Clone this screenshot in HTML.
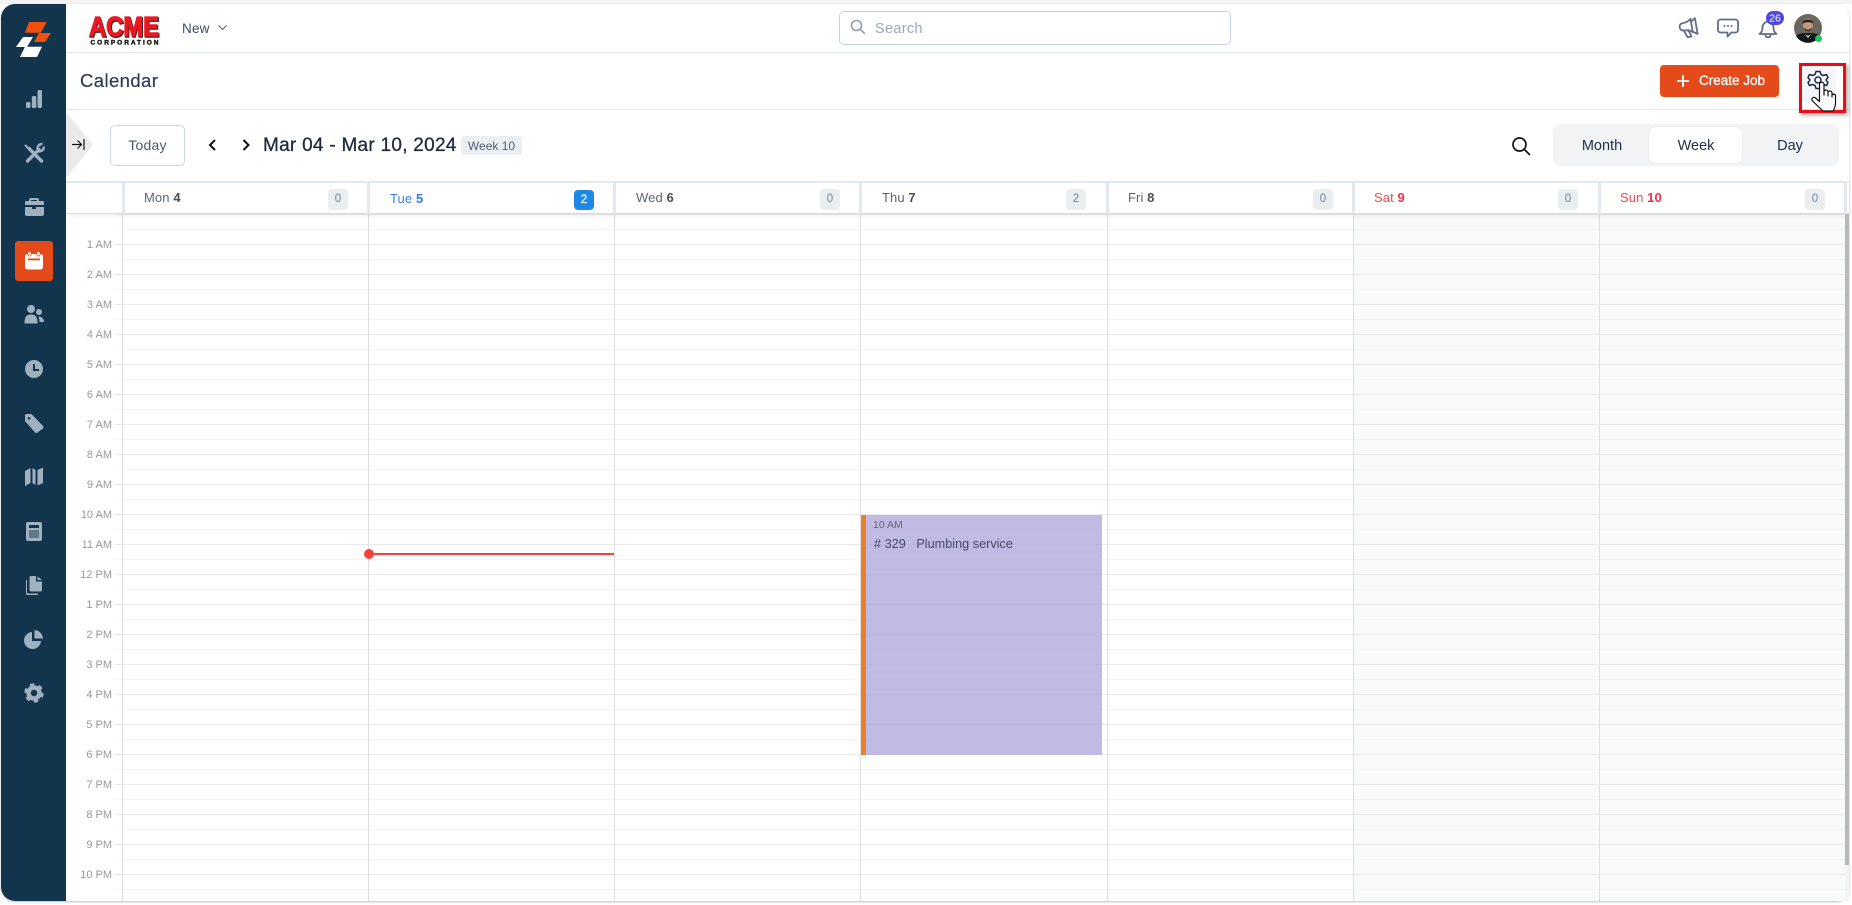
<!DOCTYPE html>
<html lang="en">
<head>
<meta charset="utf-8">
<title>Calendar</title>
<style>
html,body{margin:0;padding:0;width:1852px;height:905px;overflow:hidden;background:#fff;font-family:"Liberation Sans",sans-serif}
.a{position:absolute}
#strip{left:0;top:0;width:1852px;height:4px;background:#f3f3f3}
#card{left:1px;top:4px;width:1848px;height:897px;background:#fff;border-radius:14px 12px 12px 14px;box-shadow:0 1px 2px rgba(0,0,0,.25);overflow:hidden}
#side{left:1px;top:4px;width:65px;height:897px;background:#12344d;border-radius:14px 0 0 14px}
.hl{background:#e2e8f0;height:1px}
.t{white-space:nowrap;line-height:1}
.tm{width:100px;left:12px;text-align:right;font-size:11px;color:#999;line-height:12px;white-space:nowrap}
.dn{top:190px;font-size:13px;line-height:15px;color:#5b6470;white-space:nowrap;letter-spacing:.1px}
.dn b{color:#4a4f57}
.bd{top:189px;width:20px;height:21px;border-radius:4px;background:#ebeef1;color:#6f8599;font-size:11.5px;line-height:21px;text-align:center}
.sep{top:182px;width:3px;height:32px;background:#e2e8f0}
.col{top:214px;width:1px;height:687px;background:#dedede}
.red{color:#f44a4f}
.red b{color:#f0304a}
</style>
</head>
<body>
<div class="a" id="strip"></div>
<div class="a" id="card"></div>

<!-- top header -->
<div class="a hl" style="left:66px;top:52px;width:1783px"></div>
<div class="a hl" style="left:66px;top:109px;width:1783px"></div>

<svg class="a" style="left:86px;top:10px" width="78" height="38" viewBox="0 0 78 38">
<text x="3" y="26" font-family="Liberation Sans" font-weight="700" font-size="28" textLength="70" lengthAdjust="spacingAndGlyphs" fill="#3a2020" stroke="#3a2020" stroke-width="1.6" transform="translate(.8 .8)">ACME</text>
<text x="3" y="26" font-family="Liberation Sans" font-weight="700" font-size="28" textLength="70" lengthAdjust="spacingAndGlyphs" fill="#ea1822" stroke="#ea1822" stroke-width="1.2">ACME</text>
<text x="4.500" y="34.500" font-family="Liberation Sans" font-weight="700" font-size="6.500" textLength="68" lengthAdjust="spacing" fill="#222" stroke="#222" stroke-width=".5">CORPORATION</text>
</svg>
<div class="a t" style="left:182px;top:22px;font-size:13.500px;color:#3b4a68;letter-spacing:.2px">New</div>
<svg class="a" style="left:217px;top:24px" width="11" height="8" viewBox="0 0 11 8"><path d="M1.500 1.500l4 4 4-4" fill="none" stroke="#55627a" stroke-width="1.100"/></svg>

<div class="a" style="left:839px;top:11px;width:390px;height:32px;border:1px solid #c5d2e2;border-radius:5px"></div>
<svg class="a" style="left:849px;top:18px" width="18" height="18" viewBox="0 0 18 18"><circle cx="7.500" cy="7.500" r="5" fill="none" stroke="#8f9db3" stroke-width="1.600"/><path d="M11.200 11.200l4.600 4.600" stroke="#8f9db3" stroke-width="1.600"/></svg>
<div class="a t" style="left:875px;top:22px;font-size:14.500px;color:#9aa8c0;letter-spacing:.3px">Search</div>

<!-- right icons -->
<svg class="a" style="left:1670px;top:10px" width="160" height="40" viewBox="1670 10 160 40">
<g fill="none" stroke="#5f6f88" stroke-width="1.800" stroke-linejoin="round" stroke-linecap="round">
<g transform="rotate(-10 1688 28)"><path d="M1692 22.500L1696.500 19.500V35.500L1692 32.500C1688 30 1684 29.500 1682 29.500A4 4 0 0 1 1682 22.500C1685 22.500 1689 22 1692 19.500Z"/><path d="M1692 19.500V33M1683.500 30L1686 37H1690L1688 30"/></g>
<path d="M1720.500 19.500H1735.500A2.500 2.500 0 0 1 1738 22V30A2.500 2.500 0 0 1 1735.500 32.500H1731.500L1727.500 36.500V32.500H1720.500A2.500 2.500 0 0 1 1718 30V22A2.500 2.500 0 0 1 1720.500 19.500Z"/>
<path d="M1768 21.500A6 6 0 0 0 1762.500 27.500C1762.500 31 1761.500 32.500 1759.500 34H1776.500C1774.500 32.500 1773.500 31 1773.500 27.500A6 6 0 0 0 1768 21.500ZM1765.500 35.500C1766 38 1770 38 1770.500 35.500"/>
</g>
<g fill="#5f6f88"><circle cx="1724.500" cy="26" r="1"/><circle cx="1728" cy="26" r="1"/><circle cx="1731.500" cy="26" r="1"/></g>
<rect x="1766" y="11" width="18" height="14" rx="7" fill="#4f46e5"/>
<text x="1775" y="21.500" text-anchor="middle" font-family="Liberation Sans" font-size="10.500" fill="#fff">26</text>
<circle cx="1808" cy="28" r="14" fill="#6a675f"/>
<path d="M1796 36C1799 33 1804 33 1808 33C1812 33 1817 33 1820 36A14 14 0 0 1 1796 36Z" fill="#15181b"/>
<ellipse cx="1808" cy="25" rx="5" ry="6.500" fill="#c09a80"/>
<path d="M1802.500 24C1802 18 1813.500 18 1813.500 24C1811 21.500 1805 21.500 1802.500 24Z" fill="#2a211c"/>
<path d="M1804 28C1805 32.500 1811 32.500 1812 28L1808 30Z" fill="#3a2d25"/>
<path d="M1805 34L1808 36L1811 34L1808 38Z" fill="#e8e8e8"/>
<circle cx="1818.500" cy="38.500" r="3.500" fill="#22c55e"/>
</svg>

<!-- page title -->
<div class="a t" style="left:80px;top:72px;font-size:18.500px;color:#2f3d55;letter-spacing:.4px;-webkit-text-stroke:.2px #2f3d55">Calendar</div>
<div class="a" style="left:1660px;top:65px;width:119px;height:32px;background:#e54b1a;border-radius:4px"></div>
<svg class="a" style="left:1676px;top:74px" width="14" height="14" viewBox="0 0 14 14"><path d="M7 1v12M1 7h12" stroke="#fff" stroke-width="1.800"/></svg>
<div class="a t" style="left:1699px;top:74px;font-size:13.500px;color:#fff;-webkit-text-stroke:.3px #fff">Create Job</div>

<!-- gear highlighted with red box -->
<div class="a" style="left:1800px;top:64px;width:36px;height:37px;background:#f3f6fa"></div>
<div class="a" style="left:1799px;top:63px;width:41px;height:44px;border:3px solid #ee0a14;box-shadow:2px 2px 4px rgba(0,0,0,.35)"></div>
<svg class="a" style="left:1800px;top:66px" width="42" height="46" viewBox="1800 66 42 46">
<g fill="none" stroke="#1d2b45" stroke-width="1.500" stroke-linejoin="round">
<path d="M1816 71.500H1820L1821 74.500L1823.500 75.500L1826.500 74.500L1828 77.500L1826 80L1828 82.500L1826.500 85.500L1823.500 84.500L1821 85.500L1820 88.500H1816L1815 85.500L1812.500 84.500L1809.500 85.500L1808 82.500L1810 80L1808 77.500L1809.500 74.500L1812.500 75.500L1815 74.500Z"/>
<circle cx="1818" cy="80" r="3"/>
</g>
<path d="M1819.500 98V84.500A2.200 2.200 0 0 1 1824 84.500V95V92A2 2 0 0 1 1828 92V96V93A2 2 0 0 1 1832 93V97V95.500A1.800 1.800 0 0 1 1835.500 95.500V103C1835.500 107 1834 109 1833 111H1823L1812.500 101A2 2 0 0 1 1815.500 98L1819.500 101.500Z" fill="#fff" stroke="#111" stroke-width="1.200" stroke-linejoin="round"/>
</svg>

<!-- toolbar -->
<svg class="a" style="left:66px;top:112px" width="28" height="67" viewBox="0 0 28 67"><path d="M0 0L27 33L0 66Z" fill="#ebebeb"/></svg>
<svg class="a" style="left:71px;top:138px" width="15" height="13" viewBox="0 0 15 13"><path d="M1 6.500H10.500M6.500 2.500L10.500 6.500L6.500 10.500M13 1V12" fill="none" stroke="#111" stroke-width="1.200"/></svg>
<div class="a" style="left:110px;top:125px;width:73px;height:39px;border:1px solid #cdd6e2;border-radius:5px;text-align:center;font-size:14px;line-height:39px;color:#4b5a70;letter-spacing:.2px">Today</div>
<svg class="a" style="left:205px;top:137px" width="50" height="16" viewBox="0 0 50 16"><path d="M10 3L5 8L10 13M38.500 3L43.500 8L38.500 13" fill="none" stroke="#111" stroke-width="2"/></svg>
<div class="a t" style="left:263px;top:136px;font-size:19px;color:#1f2a3d;letter-spacing:.27px;-webkit-text-stroke:.3px #1f2a3d">Mar 04 - Mar 10, 2024</div>
<div class="a" style="left:461px;top:136px;width:61px;height:19px;background:#ebeef2;border-radius:3px;text-align:center;font-size:12px;line-height:20px;color:#4f6072">Week 10</div>
<svg class="a" style="left:1510px;top:135px" width="22" height="22" viewBox="0 0 22 22"><circle cx="9.500" cy="9.500" r="6.500" fill="none" stroke="#111" stroke-width="1.700"/><path d="M14.200 14.200L20 20" stroke="#111" stroke-width="1.700"/></svg>
<div class="a" style="left:1553px;top:124px;width:286px;height:42px;background:#f1f3f5;border-radius:8px"></div>
<div class="a" style="left:1649px;top:127px;width:93px;height:36px;background:#fff;border-radius:6px;box-shadow:0 0 1px rgba(0,0,0,.2)"></div>
<div class="a t" style="left:1552px;width:100px;top:139px;text-align:center;font-size:14.500px;color:#1f2d45">Month</div>
<div class="a t" style="left:1646px;width:100px;top:139px;text-align:center;font-size:14.500px;color:#1f2d45">Week</div>
<div class="a t" style="left:1740px;width:100px;top:139px;text-align:center;font-size:14.500px;color:#1f2d45">Day</div>

<!-- calendar grid -->
<div class="a" style="left:1353px;top:214px;width:492px;height:687px;background:#f9fafa"></div>
<div class="a" style="left:115px;top:214px;width:1730px;height:687px;background-image:linear-gradient(#f3f4f4 1px,transparent 1px),linear-gradient(#e9e9e9 1px,transparent 1px);background-size:100% 30px,100% 30px;background-position:0 15px,0 0"></div>
<div class="a col" style="left:122px"></div>
<div class="a col" style="left:368px"></div>
<div class="a col" style="left:614px"></div>
<div class="a col" style="left:860px"></div>
<div class="a col" style="left:1107px"></div>
<div class="a col" style="left:1353px"></div>
<div class="a col" style="left:1599px"></div>

<!-- day header -->
<div class="a" style="left:66px;top:181px;width:1783px;height:33px;background:#fff;border-top:2px solid #e2e8f0;border-bottom:1px solid #dcdcdc;box-sizing:border-box;box-shadow:0 3px 5px rgba(0,0,0,.05)"></div>
<div class="a sep" style="left:122px"></div>
<div class="a sep" style="left:367px"></div>
<div class="a sep" style="left:613px"></div>
<div class="a sep" style="left:859px"></div>
<div class="a sep" style="left:1106px"></div>
<div class="a sep" style="left:1352px"></div>
<div class="a sep" style="left:1598px"></div>
<div class="a sep" style="left:1844px"></div>

<div class="a dn" style="left:144px">Mon <b>4</b></div><div class="a bd" style="left:328px">0</div>
<div class="a dn" style="left:390px;color:#3f7fe8;top:191px">Tue <b style="color:#2f7be8">5</b></div><div class="a bd" style="left:574px;background:#1e88e5;color:#fff;top:190px;height:20px;line-height:20px;-webkit-text-stroke:.2px #fff">2</div>
<div class="a dn" style="left:636px">Wed <b>6</b></div><div class="a bd" style="left:820px">0</div>
<div class="a dn" style="left:882px">Thu <b>7</b></div><div class="a bd" style="left:1066px">2</div>
<div class="a dn" style="left:1128px">Fri <b>8</b></div><div class="a bd" style="left:1313px">0</div>
<div class="a dn red" style="left:1374px">Sat <b>9</b></div><div class="a bd" style="left:1558px">0</div>
<div class="a dn red" style="left:1620px">Sun <b>10</b></div><div class="a bd" style="left:1805px">0</div>

<!-- time labels -->
<div class="a tm" style="top:239px">1 AM</div>
<div class="a tm" style="top:269px">2 AM</div>
<div class="a tm" style="top:299px">3 AM</div>
<div class="a tm" style="top:329px">4 AM</div>
<div class="a tm" style="top:359px">5 AM</div>
<div class="a tm" style="top:389px">6 AM</div>
<div class="a tm" style="top:419px">7 AM</div>
<div class="a tm" style="top:449px">8 AM</div>
<div class="a tm" style="top:479px">9 AM</div>
<div class="a tm" style="top:509px">10 AM</div>
<div class="a tm" style="top:539px">11 AM</div>
<div class="a tm" style="top:569px">12 PM</div>
<div class="a tm" style="top:599px">1 PM</div>
<div class="a tm" style="top:629px">2 PM</div>
<div class="a tm" style="top:659px">3 PM</div>
<div class="a tm" style="top:689px">4 PM</div>
<div class="a tm" style="top:719px">5 PM</div>
<div class="a tm" style="top:749px">6 PM</div>
<div class="a tm" style="top:779px">7 PM</div>
<div class="a tm" style="top:809px">8 PM</div>
<div class="a tm" style="top:839px">9 PM</div>
<div class="a tm" style="top:869px">10 PM</div>

<!-- now line -->
<div class="a" style="left:369px;top:553px;width:245px;height:2px;background:#f44336"></div>
<div class="a" style="left:364px;top:549px;width:10px;height:10px;border-radius:50%;background:#f44336"></div>

<!-- event -->
<div class="a" style="left:861px;top:515px;width:241px;height:240px;background:rgba(175,168,220,.78);border-left:5px solid #e9812a;box-sizing:border-box"></div>
<div class="a t" style="left:873px;top:520px;font-size:10.500px;color:#66646f">10 AM</div>
<div class="a t" style="left:874px;top:538px;font-size:12.700px;color:#454a63"># 329 &nbsp; Plumbing service</div>

<!-- scrollbar -->
<div class="a" style="left:1845px;top:214px;width:4px;height:687px;background:#f5f5f5"></div>
<div class="a" style="left:1845px;top:214px;width:4px;height:651px;background:#b9b9b9"></div>

<!-- sidebar -->
<div class="a" id="side"></div>
<div class="a" style="left:15px;top:241px;width:38px;height:40px;background:#e54b1a;border-radius:3px"></div>
<svg class="a" style="left:0;top:0" width="66" height="720" viewBox="0 0 66 720">
<g fill="#f2500f"><path d="M29 22H46.700L40.700 32.700H25Z"/><path d="M39 33H51L45 42H34Z"/></g>
<g fill="#fff"><path d="M23 37H33L27 47H16Z"/><path d="M25 46.700H42L37 57H20Z"/></g>
<g fill="#9fb0be">
<!-- bars -->
<rect x="26" y="102" width="4.500" height="6" rx="1.500"/><rect x="31.800" y="96" width="4.500" height="12" rx="1.500"/><rect x="37.500" y="90" width="4.500" height="18" rx="1.500"/>
<!-- briefcase -->
<path d="M31 198H37A2 2 0 0 1 39 200V201H43A1.500 1.500 0 0 1 44 202.500V205H25V202.500A1.500 1.500 0 0 1 26 201H29V200A2 2 0 0 1 31 198ZM31 200V201H37V200Z" fill-rule="evenodd"/><path d="M25 207H32V209H36V207H44V214A2 2 0 0 1 42 216H27A2 2 0 0 1 25 214Z"/>
<!-- users -->
<circle cx="31" cy="309" r="4"/><path d="M24.500 323.500C24.500 316 27 314.500 31 314.500C35 314.500 37.500 316 37.500 323.500Z"/><circle cx="39" cy="312" r="3"/><path d="M38.500 316.500C42 316.500 44 319 44 322H39.500C39.500 319.500 39 318 38.500 316.500Z"/>
<!-- clock -->
<path d="M34 360A9 9 0 1 0 34 378A9 9 0 1 0 34 360ZM33 364H35V369H39V371H33Z" fill-rule="evenodd"/>
<!-- tag -->
<path d="M26 414H31.500L43 426A2 2 0 0 1 43 428.500L37.500 432.500A2 2 0 0 1 35 432.500L25 421V415ZM29 417A1.300 1.300 0 1 0 29 419.600A1.300 1.300 0 1 0 29 417Z" fill-rule="evenodd"/>
<!-- map -->
<path d="M25 471L30.500 468V483L25 486ZM32.500 468L35.500 470V485L32.500 483ZM37.500 470L43 467.500V483L37.500 485.500Z"/>
<!-- calc -->
<path d="M28 522H40A2 2 0 0 1 42 524V539A2 2 0 0 1 40 541H28A2 2 0 0 1 26 539V524A2 2 0 0 1 28 522ZM29 525V528H39V525ZM29 530V538H39V530Z" fill-rule="evenodd"/><path d="M29 530h10v8h-10z" opacity=".55"/>
<!-- files -->
<path d="M31 576H36V581.500H42V590A1.500 1.500 0 0 1 40.500 591.500H31A1.500 1.500 0 0 1 29.500 590V577.500A1.500 1.500 0 0 1 31 576ZM37.500 576.500L42 580H37.500Z"/><path d="M27 579.500V592A1.500 1.500 0 0 0 28.500 593.500H38V595H27.500A1.500 1.500 0 0 1 26 593.500V581A1.500 1.500 0 0 1 27 579.500Z"/>
<!-- pie -->
<path d="M32.500 631.500V640.500H41.500A8.500 8.500 0 1 1 32.500 631.500Z" transform="translate(-.5 .5)"/><path d="M34.500 630A9 9 0 0 1 43 638.500H34.500Z"/>
</g>
<!-- gear -->
<g fill="none" stroke="#9fb0be">
<circle cx="34" cy="693" r="5.500" stroke-width="4.500"/>
<circle cx="34" cy="693" r="8" stroke-width="3.500" stroke-dasharray="4.200 4.180"/>
</g>
<!-- tools: wrench and screwdriver -->
<g fill="none" stroke="#9fb0be" stroke-linecap="round">
<path d="M29 148.500L41.500 161" stroke-width="3.400"/>
<path d="M25.500 145.500L28.500 148.500" stroke-width="2"/>
<path d="M39 149.500L27.500 161" stroke-width="3.400"/>
<path d="M37.500 148.500A4.500 4.500 0 0 1 41.500 144M43.800 147.500A4.500 4.500 0 0 1 39.500 151.500" stroke-width="2.400"/>
</g>
<!-- calendar icon -->
<g>
<path d="M27.500 254H40.500A2.500 2.500 0 0 1 43 256.500V267A2.500 2.500 0 0 1 40.500 269.500H27.500A2.500 2.500 0 0 1 25 267V256.500A2.500 2.500 0 0 1 27.500 254Z" fill="#fff"/>
<rect x="28" y="251.500" width="3" height="4.500" rx="1" fill="#fff" stroke="#e54b1a" stroke-width=".8"/>
<rect x="37" y="251.500" width="3" height="4.500" rx="1" fill="#fff" stroke="#e54b1a" stroke-width=".8"/>
<rect x="28" y="258.500" width="12" height="1.800" fill="#e54b1a"/>
</g>
</svg>
</body>
</html>
